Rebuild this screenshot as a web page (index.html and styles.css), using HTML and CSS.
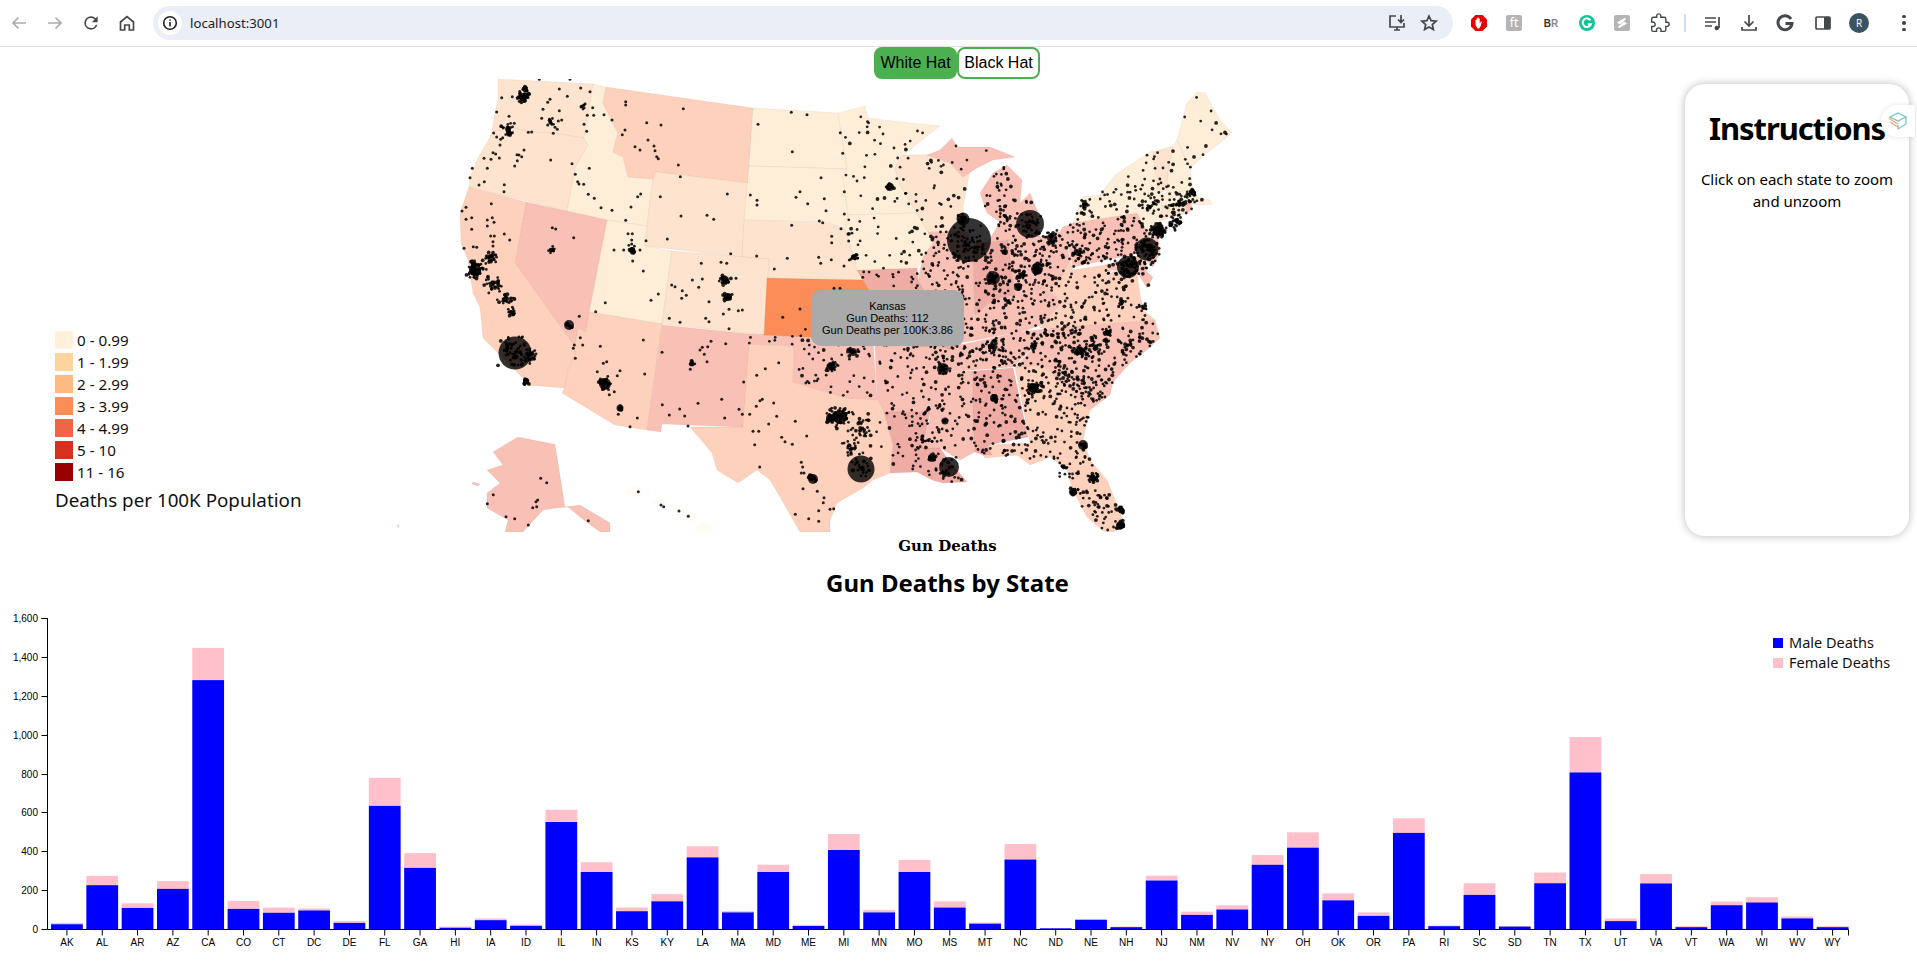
FILE: index.html
```html
<!DOCTYPE html>
<html lang="en">
<head>
<meta charset="utf-8">
<title>Gun Deaths</title>
<link rel="stylesheet" href="styles.css">
</head>
<body>
<header class="toolbar">
  <div class="nav-group">
    <svg class="tb-icon muted" viewBox="0 0 20 20"><path d="M17 10H4M9.5 4.5 4 10l5.500 5.500"/></svg>
    <svg class="tb-icon muted" viewBox="0 0 20 20"><path d="M3 10h13M10.500 4.500 16 10l-5.500 5.500"/></svg>
    <svg class="tb-icon solid" viewBox="0 0 24 24"><path d="M17.650 6.350A7.950 7.950 0 0 0 12 4a8 8 0 1 0 7.730 10h-2.080A6 6 0 1 1 12 6c1.660 0 3.140.690 4.220 1.780L13 11h7V4l-2.350 2.350z"/></svg>
    <svg class="tb-icon" viewBox="0 0 20 20"><path d="M3.500 9 10 3.500 16.500 9v8h-4.200v-5H7.700v5H3.500z"/></svg>
  </div>
  <div class="omnibox">
    <span class="site-info"><svg class="info" viewBox="0 0 20 20"><circle cx="10" cy="10" r="7"/><path d="M10 9v5M10 6v1.600"/></svg></span>
    <span class="url">localhost:3001</span>
    <span class="omni-actions">
      <svg class="tb-icon" viewBox="0 0 20 20"><path d="M9 3H3v11h14V10M7 17h6M10 14v3M14 2v7M11 6.500 14 9.500l3-3"/></svg>
      <svg class="tb-icon" viewBox="0 0 20 20"><path d="m10 3 2.100 4.700 5 .5-3.800 3.300 1.100 5L10 13.900l-4.400 2.600 1.100-5L2.900 8.200l5-.5z"/></svg>
    </span>
  </div>
  <div class="ext-group">
    <svg class="ext" viewBox="0 0 18 18"><polygon class="red" points="5.500,1 12.500,1 17,5.500 17,12.500 12.500,17 5.500,17 1,12.500 1,5.500"/><path class="hand" d="M5.500 9V6h1v2.500-4h1v4-5h1.200v5-4h1v5l1.200-2h1l-1.200 4.500-1.500 2.500H7.500L5.500 11z"/></svg>
    <span class="tile">ft</span>
    <span class="ext-text"><b>B</b><i>R</i></span>
    <svg class="ext" viewBox="0 0 18 18"><circle class="green" cx="9" cy="9" r="8"/><path class="wh" d="M12.500 6.200A4.300 4.300 0 1 0 13 10.200H9.800"/></svg>
    <span class="tile"><svg class="ext-s" viewBox="0 0 16 16"><path d="M3 8 12 3M4 13l9-5M12 3 5 9M11 7l-7 6"/></svg></span>
    <svg class="tb-icon puzzle" viewBox="0 0 24 24"><path d="M20.500 11H19V7c0-1.100-.9-2-2-2h-4V3.500C13 2.120 11.880 1 10.500 1S8 2.120 8 3.500V5H4c-1.100 0-2 .9-2 2v3.800h1.500c1.500 0 2.700 1.200 2.700 2.700S5 16.200 3.500 16.200H2V20c0 1.100.9 2 2 2h3.800v-1.500c0-1.500 1.200-2.700 2.700-2.700s2.700 1.200 2.700 2.700V22H17c1.100 0 2-.9 2-2v-4h1.500c1.380 0 2.500-1.120 2.500-2.500S21.880 11 20.500 11z"/></svg>
    <span class="sep"></span>
    <svg class="tb-icon" viewBox="0 0 20 20"><path d="M2 5h11M2 9h11M2 13h7M16 4v11"/><circle class="fillc" cx="13.800" cy="15" r="2.300"/></svg>
    <svg class="tb-icon" viewBox="0 0 20 20"><path d="M10 2v11M5.500 8.500 10 13l4.500-4.500M3 14v3h14v-3"/></svg>
    <svg class="tb-icon bold" viewBox="0 0 20 20"><path d="M16 6A7 7 0 1 0 17 10.500H10.500"/></svg>
    <svg class="tb-icon" viewBox="0 0 20 20"><rect x="3" y="4" width="14" height="12" rx="1"/><rect class="fillc" x="11" y="4" width="6" height="12"/></svg>
    <span class="avatar">R</span>
    <span class="kebab"><i></i><i></i><i></i></span>
  </div>
</header>

<main class="page">
  <div class="hat-toggle">
    <button class="hat hat-on" type="button">White Hat</button>
    <button class="hat" type="button">Black Hat</button>
  </div>

  <section class="map-row">
    <aside class="legend">
      <ul class="legend-list">
        <li><span class="swatch l0"></span>0 - 0.99</li>
        <li><span class="swatch l1"></span>1 - 1.99</li>
        <li><span class="swatch l2"></span>2 - 2.99</li>
        <li><span class="swatch l3"></span>3 - 3.99</li>
        <li><span class="swatch l4"></span>4 - 4.99</li>
        <li><span class="swatch l5"></span>5 - 10</li>
        <li><span class="swatch l6"></span>11 - 16</li>
      </ul>
      <p class="legend-title">Deaths per 100K Population</p>
    </aside>

    <div class="map-wrap">
      <svg id="map" class="map" viewBox="380 79 880 453" width="880" height="453">
        <g id="states">
          <polygon class="st s4" data-dots="0" points="555,444 553,444 518,437 493,452 503,465 487,470 500,483 487,493 487,508 508,520 505,532 523,532 543,510 557,508 568,507 580,517 600,532 610,532 610,523 580,505 565,507" />
          <polygon class="st s4" points="473,482 480,484 478,486 472,484" />
          <polygon class="st s4" points="397,524 399,526 398,528" />
          <ellipse class="s9" cx="635" cy="492" rx="9" ry="5" />
          <ellipse class="s9" cx="660" cy="502" rx="6" ry="4" />
          <ellipse class="s9" cx="679" cy="510" rx="5" ry="2.500" />
          <ellipse class="s9" cx="690" cy="517" rx="7" ry="4" />
          <ellipse class="s9" cx="704" cy="530" rx="9" ry="7" />

          <polygon class="st s3" data-dots="0" points="498,79 593,84 584,138 553,133 532,132 513,128 505,130 492,131 495,113 498,100" />
          <polygon class="st s3" data-dots="0" points="492,131 505,130 513,128 532,132 553,133 584,138 588,145 575,168 567,211 469,187 470,177 477,160 490,137" />
          <polygon class="st s1" data-dots="0" points="593,84 606,87 603,103 618,133 613,152 623,157 628,177 653,179 647,226 607,220 567,211 575,168 588,145 584,138" />
          <polygon class="st s2" data-dots="0" points="606,87 753,108 748,183 656,172 653,179 628,177 623,157 613,152 618,133 603,103" />
          <polygon class="st s3" data-dots="0" points="656,172 748,183 742,257 645,246 647,226 653,179" />
          <polygon class="st s1" data-dots="0" points="753,108 838,113 847,169 749,166" />
          <polygon class="st s1" data-dots="0" points="749,166 847,169 843,177 848,215 845,230 830,222 744,220" />
          <polygon class="st s3" data-dots="0" points="744,220 830,223 845,230 853,253 863,280 767,278 769,259 742,257" />
          <polygon class="st s1" data-dots="0" points="607,220 647,226 645,246 672,251 662,324 589,312" />
          <polygon class="st s3" data-dots="0" points="672,251 769,259 764,335 662,324" />
          <polygon class="st s4" data-dots="0" points="526,202 607,220 589,312 586,332 578,328 575,347 515,263" />
          <polygon class="st s2" data-dots="0" points="469,187 526,202 515,263 575,347 575,355 568,370 565,388 527,385 523,378 498,353 483,338 482,327 480,307 473,293 468,260 461,243 460,213" />
          <polygon class="st s2" data-dots="0" points="589,312 662,324 647,430 615,425 562,393 565,388 568,370 575,355 575,347 578,328 586,332" />
          <polygon class="st s4" data-dots="0" points="662,325 750,334 743,427 688,425 662,424 661,432 647,430" />
          <polygon class="st s2" data-dots="0" points="749,344 794,346 793,382 813,388 847,398 877,397 884,412 893,445 890,473 873,480 863,488 837,503 830,520 830,532 800,532 780,497 770,480 757,470 738,483 717,470 712,453 690,427 743,427" />
          <polygon class="st s4" data-dots="45" points="750,334 873,340 877,400 847,398 813,388 793,382 794,346 749,344" />
          <polygon class="st s5" data-dots="75" points="857,270 917,268 918,280 930,300 945,320 960,345 955,352 945,348 875,345 873,340 869,290 863,280" />
          <polygon class="st s4" data-dots="50" points="875,345 945,348 955,352 937,372 928,403 930,412 884,412 877,397" />
          <polygon class="st s5" data-dots="45" points="884,412 930,412 923,448 940,448 950,462 967,482 943,483 932,480 917,472 890,473 893,445" />
          <polygon class="st s1" data-dots="30" points="838,113 865,106 868,118 900,122 940,126 903,155 895,168 900,185 917,213 848,215 843,177 847,169" />
          <polygon class="st s1" data-dots="25" points="848,215 917,213 933,240 923,260 917,268 857,270 853,253 845,230" />
          <polygon class="st s3" data-dots="32" points="903,155 927,155 950,163 963,177 970,170 963,207 965,232 928,232 917,213 900,185 895,168" />
          <polygon class="st s4" data-dots="95" points="928,232 968,232 973,260 975,313 968,335 960,345 945,320 930,300 918,280 923,257 933,243" />
          <polygon class="st s5" data-dots="55" points="975,243 988,242 1008,240 1015,295 993,300 975,315 973,260" />
          <polygon class="st s4" data-dots="42" points="988,242 1000,222 987,213 980,193 993,173 1007,165 1022,180 1020,203 1030,193 1037,210 1040,237 1008,240" />
          <polygon class="st s4" data-dots="4" points="927,155 940,150 952,138 957,147 990,147 1015,157 993,160 977,168 963,177 950,163" />
          <polygon class="st s4" data-dots="90" points="1008,240 1040,237 1060,232 1063,227 1070,260 1060,280 1047,290 1027,283 1015,295" />
          <polygon class="st s4" data-dots="70" points="960,345 968,335 975,315 993,300 1015,295 1027,283 1047,290 1062,302 1042,325 1020,332 960,343" />
          <polygon class="st s4" data-dots="95" points="937,372 945,352 960,345 1020,332 1053,328 1013,367 973,370" />
          <polygon class="st s4" data-dots="55" points="937,372 973,371 975,452 960,460 940,448 923,448 930,417 928,403" />
          <polygon class="st s5" data-dots="70" points="973,371 1013,368 1028,437 988,445 992,455 983,455 975,452 973,420" />
          <polygon class="st s2" data-dots="90" points="1015,367 1040,363 1073,393 1090,410 1083,440 1030,443 1028,433" />
          <polygon class="st s4" data-dots="65" points="1040,363 1047,365 1073,375 1113,382 1110,395 1090,410 1073,393" />
          <polygon class="st s4" data-dots="135" points="1053,328 1155,320 1160,338 1147,350 1130,363 1113,382 1073,375 1047,365 1015,367" />
          <polygon class="st s2" data-dots="60" points="1040,328 1062,302 1080,305 1095,290 1112,272 1117,270 1137,272 1140,295 1143,310 1155,320 1053,328" />
          <polygon class="st s2" data-dots="20" points="1070,260 1073,270 1105,265 1112,270 1095,290 1080,305 1062,302 1047,290 1060,280" />
          <polygon class="st s4" data-dots="95" points="1063,227 1073,223 1137,213 1145,228 1150,238 1140,253 1073,267" />
          <polygon class="st s4" data-dots="15" points="1105,265 1112,263 1140,255 1147,272 1153,277 1147,288 1137,272 1117,270 1112,270" />
          <polygon class="st s1" data-dots="6" points="1142,257 1147,253 1147,272" />
          <polygon class="st s4" data-dots="18" points="1145,228 1158,237 1160,253 1153,267 1142,257 1148,243" />
          <polygon class="st s1" data-dots="55" points="1073,223 1082,197 1100,195 1115,175 1153,150 1160,193 1162,205 1162,217 1160,230 1180,217 1183,219 1162,234 1150,238 1145,228 1137,213" />
          <polygon class="st s3" data-dots="8" points="1153,152 1173,146 1168,173 1167,190 1158,193" />
          <polygon class="st s1" data-dots="8" points="1173,146 1177,140 1190,168 1193,190 1167,193 1168,173" />
          <polygon class="st s1" data-dots="12" points="1177,140 1187,103 1197,92 1205,93 1220,120 1232,133 1207,153 1190,168" />
          <polygon class="st s1" data-dots="20" points="1160,194 1193,190 1198,197 1210,200 1212,204 1200,205 1190,203 1162,206" />
          <polygon class="st s3" data-dots="15" points="1162,206 1185,202 1187,213 1162,220" />
          <polygon class="st s4" data-dots="2" points="1185,202 1191,203 1192,210 1187,213" />
          <polygon class="st s2" data-dots="85" points="988,445 1030,443 1083,439 1090,460 1107,480 1123,520 1123,527 1113,532 1103,531 1087,517 1073,490 1067,470 1050,457 1030,465 1017,455 985,458 983,455 992,455" />
          <polygon class="st s-hot" data-dots="2" points="767,278 863,280 869,290 872,340 764,335" />
        </g>
        <g id="dots"></g>
      </svg>
      <div class="tooltip">Kansas<br>Gun Deaths: 112<br>Gun Deaths per 100K:3.86</div>
    </div>

    <aside class="instructions">
      <h1>Instructions</h1>
      <p>Click on each state to zoom and unzoom</p>
      <span class="ext-tab"><svg viewBox="0 0 20 20"><path class="teal" d="M10 2 18 6l-8 4-8-4zM18 6v7l-8 5v-4"/><path class="tan" d="M2 6v2l8 5M2 11l8 5"/></svg></span>
    </aside>
  </section>

  <p class="map-caption">Gun Deaths</p>
  <h2 class="chart-title">Gun Deaths by State</h2>

  <svg id="chart" class="chart" viewBox="0 610 1917 351" width="1917" height="351"></svg>
</main>
<script src="script.js"></script>
</body>
</html>
```
FILE: styles.css
```css
* { box-sizing: border-box; }
html, body { margin: 0; height: 961px; overflow: hidden; background: #fff; }
body { font-family: "Noto Sans", "Open Sans", sans-serif; color: #000; }

/* browser toolbar */
.toolbar { height: 47px; display: flex; align-items: center; border-bottom: 1px solid #dfe1e5; background: #fff; padding-left: 9px; }
.nav-group { display: flex; gap: 16px; width: 144px; }
.tb-icon { width: 20px; height: 20px; flex: none; fill: none; stroke: #45484b; stroke-width: 1.700; }
.tb-icon.muted { stroke: #a9abae; }
.tb-icon.solid { fill: #45484b; stroke: none; }
.tb-icon.bold { stroke-width: 3; }
.tb-icon .fillc { fill: #45484b; stroke: none; }
.omnibox { width: 1300px; height: 34px; background: #ebeef7; border-radius: 17px; display: flex; align-items: center; padding-left: 5px; }
.site-info { width: 24px; height: 24px; background: #fff; border-radius: 50%; display: flex; align-items: center; justify-content: center; }
.info { width: 18px; height: 18px; fill: none; stroke: #202124; stroke-width: 1.800; }
.url { font-size: 13.200px; color: #202124; margin-left: 8px; }
.omni-actions { margin-left: auto; margin-right: 14px; display: flex; gap: 12px; }
.ext-group { display: flex; align-items: center; margin-left: 17px; }
.ext { width: 18px; height: 18px; flex: none; margin-right: 18px; }
.ext .red { fill: #e60000; }
.ext .hand { fill: #fff; }
.ext .green { fill: #15c39a; }
.ext .wh { fill: none; stroke: #fff; stroke-width: 2; }
.tile { width: 16px; height: 16px; flex: none; background: #b4b4b4; border-radius: 2px; margin-right: 20px; display: flex; align-items: center; justify-content: center; color: #fff; font-size: 12px; line-height: 1; }
.ext-s { width: 14px; height: 14px; fill: none; stroke: #fff; stroke-width: 2; }
.ext-text { width: 18px; margin-right: 18px; font: 700 10px "Liberation Sans", sans-serif; text-align: center; }
.ext-text b { color: #333; }
.ext-text i { color: #888; font-style: normal; }
.sep { width: 2px; height: 18px; background: #cfe0f8; margin: 0 17px 0 0; flex: none; }
.ext-group .tb-icon { margin-right: 16px; }
.ext-group .tb-icon.puzzle { margin-right: 14px; }
.ext-group .tb-icon.bold { margin-right: 18px; }
.avatar { width: 20px; height: 20px; border-radius: 50%; background: #3c5361; color: #fff; font: 10px/20px "Noto Sans", sans-serif; text-align: center; flex: none; }
.kebab { display: flex; flex-direction: column; gap: 3px; margin-left: 33px; }
.kebab i { width: 3.500px; height: 3.500px; border-radius: 50%; background: #45484b; }

/* page */
.page { position: relative; }
.hat-toggle { display: flex; justify-content: center; height: 32px; padding-right: 3px; }
.hat { width: 83px; height: 32px; padding: 0; font: 16px "Liberation Sans", Arial, sans-serif; color: #000; background: #fff; border: 2px solid #4caf50; border-radius: 8px; }
.hat-on { background: #4caf50; }

.map-row { display: grid; grid-template-columns: 380px 880px 1fr; height: 453px; }
.legend { align-self: end; padding-left: 55px; padding-bottom: 22px; }
.legend-list { list-style: none; margin: 0; padding: 0; display: flex; flex-direction: column; gap: 4px; font-size: 15.200px; color: #111; }
.legend-list li { display: flex; align-items: center; gap: 4px; height: 18px; white-space: nowrap; }
.swatch { width: 18px; height: 18px; flex: none; }
.l0 { background: #fef0d9; } .l1 { background: #fdd49e; } .l2 { background: #fdbb84; } .l3 { background: #fc8d59; }
.l4 { background: #ef6548; } .l5 { background: #d7301f; } .l6 { background: #990000; }
.legend-title { margin: 6px 0 0; font-size: 18.800px; line-height: 27px; white-space: nowrap; color: #111; }

.map-wrap { position: relative; width: 880px; height: 453px; }
.map { display: block; }
.st { stroke: #8a5a3c; stroke-opacity: .08; stroke-width: 1; }
.s1 { fill: #feeed8; }
.s2 { fill: #fed1bd; }
.s3 { fill: #fee4ce; }
.s4 { fill: #f9c1b6; }
.s5 { fill: #efaca5; }
.s9 { fill: #fffaf3; }
.s-hot { fill: #fc8d59; }
.dot { fill: #000; fill-opacity: .85; }
.bubble { fill: #000; fill-opacity: .8; }
.tooltip { position: absolute; left: 431px; top: 211px; width: 153px; height: 56px; padding-top: 10px; background: #aaa; border-radius: 10px; font: 11px/12px "Liberation Sans", Arial, sans-serif; text-align: center; color: #000; }

.instructions { position: relative; width: 224px; height: 452px; margin: 5px 0 0 425px; padding: 0 10px; background: #fff; border-radius: 20px; box-shadow: 0 0 8px rgba(0,0,0,.28); text-align: center; }
.instructions h1 { margin: 20px 0 0; font-size: 31px; line-height: 48px; font-weight: 700; letter-spacing: -1.100px; white-space: nowrap; }
.instructions p { margin: 16px 0 0; font-size: 15px; line-height: 22px; }
.ext-tab { position: absolute; left: 196px; top: 21px; width: 34px; height: 32px; background: #fff; border-radius: 16px 0 0 16px; box-shadow: 0 0 5px rgba(0,0,0,.12); display: flex; align-items: center; justify-content: center; }
.ext-tab svg { width: 20px; height: 20px; fill: none; stroke-width: 1.200; }
.ext-tab .teal { stroke: #6fc3c9; }
.ext-tab .tan { stroke: #e6a57e; }

.map-caption { margin: 1px 0 0; width: 1895px; text-align: center; font: 700 15px/26px "DejaVu Serif", serif; }
.chart-title { margin: 8px 0 0; width: 1895px; text-align: center; font-size: 24px; line-height: 32px; font-weight: 700; }
.chart { display: block; margin-top: 11px; }
.axis-line { fill: none; stroke: #000; stroke-width: 1; }
.axis-text { font: 10px "Liberation Sans", Arial, sans-serif; fill: #000; }
.bar-male { fill: #00f; }
.bar-female { fill: #ffc0cb; }
.chart-legend { font-family: "Noto Sans", sans-serif; font-size: 14.500px; fill: #111; }
```
FILE: script.js
```js
(function () {
  var NS = "http://www.w3.org/2000/svg";
  function el(parent, tag, attrs, text) {
    var n = document.createElementNS(NS, tag);
    for (var k in attrs) n.setAttribute(k, attrs[k]);
    if (text !== undefined) n.textContent = text;
    parent.appendChild(n);
    return n;
  }
  var seed = 12345;
  function rnd() { seed = (seed * 16807) % 2147483647; return seed / 2147483647; }
  function gauss() { return (rnd() + rnd() + rnd() - 1.5) / 0.87; }

  var dots = document.getElementById("dots");
  function dot(x, y, r) { el(dots, "circle", { class: "dot", cx: x.toFixed(1), cy: y.toFixed(1), r: r || 1.5 }); }

  function inside(pts, x, y) {
    var c = false;
    for (var i = 0, j = pts.length - 1; i < pts.length; j = i++) {
      if ((pts[i][1] > y) !== (pts[j][1] > y) &&
          x < (pts[j][0] - pts[i][0]) * (y - pts[i][1]) / (pts[j][1] - pts[i][1]) + pts[i][0]) c = !c;
    }
    return c;
  }

  // random scatter over each state, in proportion to its data-dots count
  document.querySelectorAll("#states polygon").forEach(function (p) {
    var n = Math.round(+(p.getAttribute("data-dots") || 0) * 1.2);
    if (!n) return;
    var pts = p.getAttribute("points").trim().split(/\s+/).map(function (s) { return s.split(",").map(Number); });
    var xs = pts.map(function (a) { return a[0]; }), ys = pts.map(function (a) { return a[1]; });
    var x0 = Math.min.apply(0, xs), x1 = Math.max.apply(0, xs), y0 = Math.min.apply(0, ys), y1 = Math.max.apply(0, ys);
    for (var i = 0, t = 0; i < n && t < n * 200; t++) {
      var x = x0 + rnd() * (x1 - x0), y = y0 + rnd() * (y1 - y0);
      if (inside(pts, x, y)) { dot(x, y, rnd() < .2 ? 1.9 : 1.4); i++; }
    }
  });

  // sparse towns of the west, read off the map; [x, y] in 3x crop units
  var west = [[737,185],[737,195],[910,206],[800,248],[843,255],[696,240],[672,224],[735,270],[727,284],[804,300],[765,320],[780,330],[822,318],[825,332],[830,350],[835,356],[895,375],[1234,217],[1281,224],[1134,253],[1237,335],[1381,278],[1388,340],[1323,413],[1260,455],[1248,472],[1283,491],[1333,476],[1338,512],[1393,455],[1393,522],[1318,543],[1328,548],[1111,465],[1131,481],[1131,495],[901,410],[841,470],[1042,462],[903,528],[981,526],[1001,538],[862,597],[798,602],[1235,556],[1383,566],[1404,582],[1355,589],[1355,608],[1406,603],[1052,641],[1130,648],[1222,655],[1316,652],[1322,670],[1354,659],[1183,687],[1392,678],[1412,658],[1448,712],[964,670],[1023,667],[1040,670],[868,835],[900,847],[977,835],[987,845],[1047,866],[937,720],[967,717],[956,742],[875,735],[885,740],[907,752],[919,766],[905,775],[987,785],[1047,808],[1030,822],[1075,812],[1087,810],[1068,715],[744,581],[757,581],[702,630],[731,630],[780,630],[755,600],[755,612],[758,663],[790,693],[835,762],[813,781],[676,788],[647,815],[517,563],[527,567],[581,593],[598,829],[628,385],[586,403],[593,425],[597,432],[611,433],[625,463],[643,475],[663,503],[696,511],[753,501],[773,470],[782,462],[737,541],[638,203],[622,226],[641,226],[612,253],[620,274],[277,385],[270,413],[297,435],[313,425],[373,434],[372,455],[404,378],[417,345],[411,344],[425,350],[432,330],[412,362],[339,338],[347,342],[358,354],[312,355],[333,358],[322,385],[512,360],[576,371],[365,173],[350,216],[397,170],[387,229],[403,250],[341,279],[350,291],[362,298],[368,293],[385,285],[360,315],[478,118],[570,118],[538,147],[562,169],[602,144],[630,155],[510,178],[503,187],[489,208],[538,212],[545,240],[535,243],[485,235],[503,255],[520,280],[445,277],[455,276],[525,262],[532,268],[334,491],[258,502],[246,513],[258,538],[275,533],[337,533],[322,540],[342,547],[322,558],[275,568],[332,588],[343,588],[373,582],[389,600],[339,605],[339,618],[252,625],[280,620],[290,622],[1208,832],[1260,807],[1380,745],[1362,745]];
  west.forEach(function (p) { dot(380 + p[0] / 3, 40 + p[1] / 3); });

  var south = [[601,53],[608,75],[583,75],[580,85],[586,115],[661,79],[790,60],[680,125],[670,130],[652,155],[720,152],[794,162],[712,167],[703,215],[688,224],[715,283],[772,294],[750,320],[846,97],[967,82],[993,64],[1037,71],[960,90],[983,80],[973,103],[981,125],[931,148],[954,250],[1025,238],[847,254],[899,267],[868,285],[914,288],[1034,294],[1077,268],[924,318],[1156,146],[1196,128],[1130,166],[1091,186],[1147,238],[1129,259],[1181,249],[1087,283],[1109,283],[1190,289],[1246,304],[1166,312],[1119,334],[1136,334],[1280,348],[1205,352],[1215,365],[1124,374],[1237,373],[1139,441],[1140,242],[482,475],[500,488],[340,524],[322,551],[378,590],[404,596],[445,615],[625,602],[473,540],[468,545],[458,563],[470,560],[775,515],[843,555],[851,560],[897,573],[925,589],[1264,427],[1268,441],[1264,459],[1272,459],[1269,506],[1312,514],[1332,533],[1330,548],[1316,572],[1350,568],[1361,566],[1286,596],[1316,604],[1246,583]];
  south.forEach(function (p) { dot(380 + p[0] / 3, 320 + p[1] / 3); });

  // [x, y, spread, count] — towns crowding round the cities
  var clusters = [
    [523,97,5,40],[525,88,3,10],[508,129,5,26],[549,121,3,8],[584,107,3,8],[632,250,4,20],[725,280,4,28],[728,297,4,18],[854,257,3,10],
    [475,270,7,70],[491,258,5,24],[494,285,7,30],[506,299,6,22],[511,312,4,14],[515,353,13,60],[530,355,6,26],[526,381,3,14],[552,250,3,12],
    [605,384,5,30],[620,408,2,8],[569,325,3,10],[692,364,3,8],[831,366,5,22],[853,352,5,16],
    [840,417,9,60],[830,418,5,20],[861,469,8,26],[813,479,4,16],[850,447,10,22],[862,430,14,40],
    [969,240,11,40],[963,219,3,14],[1030,224,9,25],[1003,215,8,16],[1052,238,5,18],[1078,253,6,20],[993,278,5,22],[1037,269,5,20],[1022,275,4,14],[1018,287,3,12],[1005,252,2,5],[890,187,3,16],
    [1147,249,9,35],[1128,267,9,50],[1159,231,6,60],[1175,222,6,24],[1192,192,4,14],[1085,205,3,10],[1180,205,5,16],[1150,205,6,16],[1121,303,4,14],[1143,308,4,12],
    [943,369,4,16],[994,398,3,12],[1033,388,5,50],[945,421,2,6],[932,458,3,12],[949,467,8,14],[922,443,6,10],[1080,351,5,30],[1108,333,4,14],[992,346,4,12],[1033,347,4,10],[1075,330,6,10],[1095,345,7,18],[1128,345,6,14],
    [1083,445,3,8],[1121,510,2,34],[1121,525,3,24],[1073,492,3,14],[1093,478,4,22],[1065,470,7,10],[1100,500,7,10]
  ];
  clusters.forEach(function (c) {
    for (var i = 0; i < c[3]; i++) {
      dot(c[0] + gauss() * c[2], c[1] + gauss() * c[2], rnd() < .25 ? 1.9 : 1.4);
    }
  });

  // [x, y, r] — the largest cities
  [[969,240,22],[963,219,6.5],[1030,224,14],[515,353,16.5],[861,469,13.5],[949,467,10],[1147,249,11.5],[1128,267,11],[1159,231,6],[1052,238,5],[993,278,7],[1037,269,6],[1018,287,4],[1005,252,3],[943,369,6],[994,398,4],[1033,388,5],[945,421,3.5],[932,458,4],[1083,445,5],[1121,525,4],[1073,492,4],[1093,478,3],[840,417,7],[830,418,4],[813,479,5],[605,384,6],[620,408,3.5],[569,325,5],[526,381,3],[475,270,6],[491,258,3.5],[506,299,3],[523,97,4],[508,129,3],[632,250,3],[725,280,4],[728,297,4],[854,257,3],[692,364,2.5],[831,366,4],[853,352,4],[890,187,4],[1085,205,3],[1080,351,4],[1108,333,3],[992,346,3],[1033,347,3],[1078,253,3],[1192,192,3],[1022,275,3]]
    .forEach(function (b) { el(dots, "circle", { class: "bubble", cx: b[0], cy: b[1], r: b[2] }); });

  // bar chart
  var data = [["AK",27,34],["AL",228,276],["AR",111,135],["AZ",209,249],["CA",1283,1449],["CO",106,147],["CT",86,113],["DC",98,108],["DE",34,43],["FL",636,780],["GA",317,393],["HI",9,15],["IA",48,57],["ID",19,25],["IL",553,616],["IN",296,346],["KS",94,113],["KY",145,182],["LA",371,428],["MA",88,95],["MD",296,333],["ME",18,24],["MI",409,491],["MN",88,101],["MO",296,358],["MS",113,145],["MT",30,36],["NC",360,440],["ND",6,8],["NE",50,53],["NH",12,15],["NJ",252,277],["NM",75,92],["NV",103,124],["NY",333,383],["OH",421,500],["OK",150,186],["OR",70,88],["PA",497,572],["RI",17,21],["SC",178,238],["SD",15,18],["TN",238,293],["TX",808,990],["UT",43,57],["VA",237,285],["VT",12,17],["WA",125,144],["WI",139,166],["WV",57,67],["WY",12,17]];
  var chart = document.getElementById("chart");
  var left = 47.5, right = 1848.5, base = 929.5, top = 618.5;
  var step = (right - left) / 51, k = (base - top) / 1600;
  data.forEach(function (d, i) {
    var x = left + step * (i + 0.1), w = step * 0.9;
    el(chart, "rect", { class: "bar-female", x: x, y: base - d[2] * k, width: w, height: (d[2] - d[1]) * k });
    el(chart, "rect", { class: "bar-male", x: x, y: base - d[1] * k, width: w, height: d[1] * k });
  });
  el(chart, "path", { class: "axis-line", d: "M41.5," + top + "H" + left + "V" + base + "H" + right + "V" + (base + 6) });
  for (var v = 0; v <= 1600; v += 200) {
    var y = Math.round(base - v * k - 0.5) + 0.5;
    el(chart, "path", { class: "axis-line", d: "M41.5," + y + "H47.5" });
    el(chart, "text", { class: "axis-text", x: 38, y: y + 3.5, "text-anchor": "end" }, v.toLocaleString("en-US"));
  }
  data.forEach(function (d, i) {
    var x = left + step * (i + 0.55);
    el(chart, "path", { class: "axis-line", d: "M" + x + "," + base + "V" + (base + 6) });
    el(chart, "text", { class: "axis-text", x: x, y: base + 16, "text-anchor": "middle" }, d[0]);
  });
  el(chart, "rect", { class: "bar-male", x: 1773, y: 638, width: 10, height: 10 });
  el(chart, "rect", { class: "bar-female", x: 1773, y: 658, width: 10, height: 10 });
  el(chart, "text", { class: "chart-legend", x: 1789, y: 648 }, "Male Deaths");
  el(chart, "text", { class: "chart-legend", x: 1789, y: 668 }, "Female Deaths");
})();
```
